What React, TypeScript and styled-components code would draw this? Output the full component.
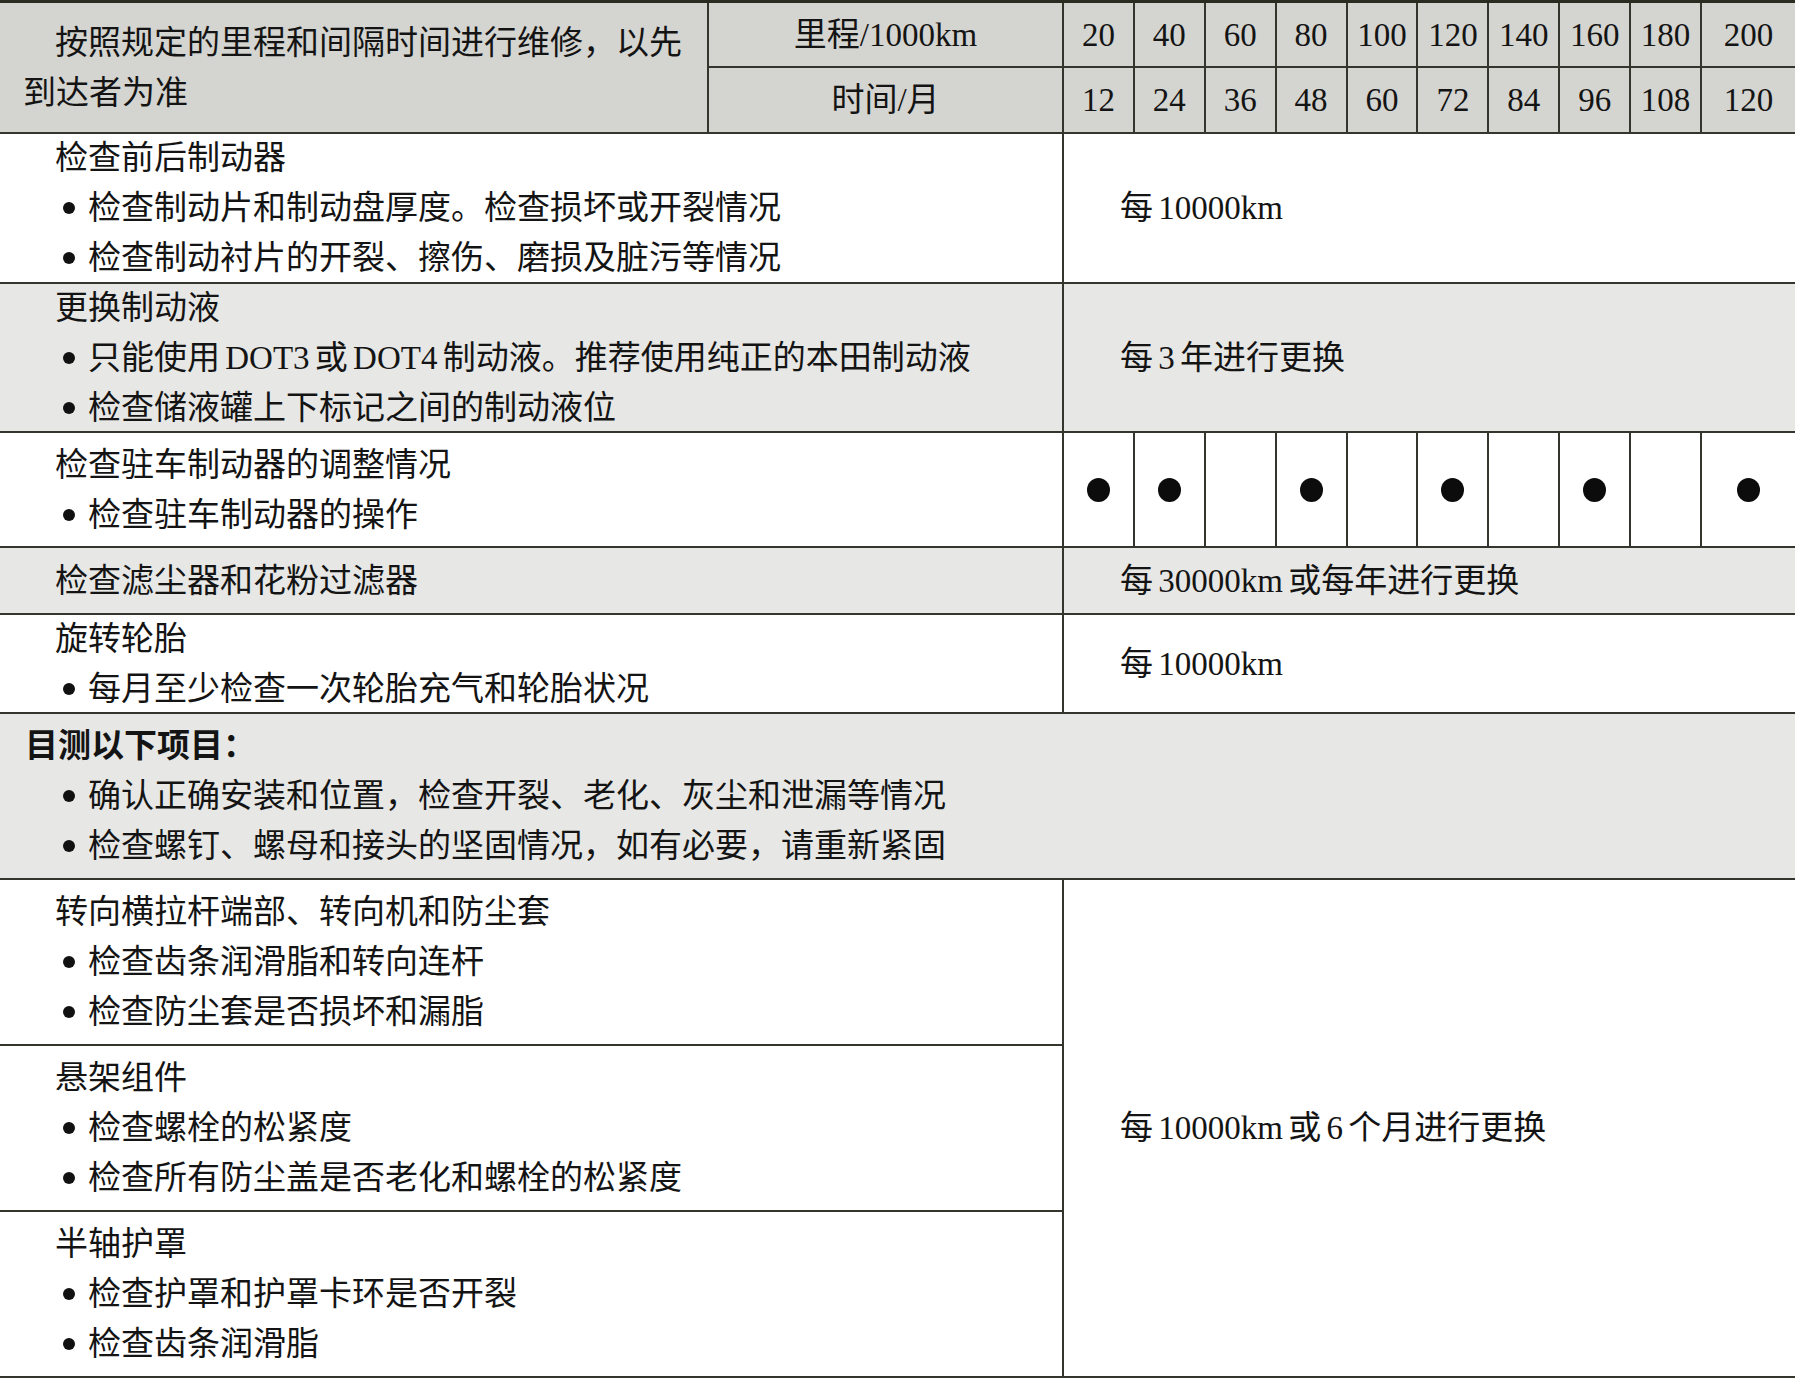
import React from "react";
import styled, { createGlobalStyle, css } from "styled-components";

const GlobalStyle = createGlobalStyle`
  html, body {
    margin: 0;
    padding: 0;
    background: #ffffff;
  }
  body {
    font-family: "Liberation Serif", "Noto Sans CJK SC", serif;
    color: #141414;
  }
`;

const LINE = "#34362e";
const HEAD_BG = "#d4d5d0";
const ZEBRA_BG = "#e7e7e5";

const Table = styled.div`
  display: grid;
  width: 1795px;
  grid-template-columns: 707px 355px repeat(9, 1fr) 95px;
  grid-template-rows: 65px 66px 150px 149px 115px 67px 99px 166px 166px 166px 166px;
  border-top: 3px solid #2a2c22;
  font-family: "Liberation Serif", "Noto Sans CJK SC", serif;
  font-size: 33px;
  line-height: 50px;
  word-spacing: -3px;
  color: #141414;
`;

type CellProps = {
  $cols?: number;
  $rows?: number;
  $bg?: string;
  $divider?: boolean;
};

const Cell = styled.div<CellProps>`
  box-sizing: border-box;
  grid-column: span ${(p) => p.$cols ?? 1};
  grid-row: span ${(p) => p.$rows ?? 1};
  background: ${(p) => p.$bg ?? "#ffffff"};
  border-bottom: 2px solid ${LINE};
  ${(p) =>
    p.$divider &&
    css`
      border-left: 2px solid ${LINE};
    `}
  display: flex;
  min-width: 0;
`;

const HeadNote = styled(Cell)`
  flex-direction: column;
  justify-content: center;
  padding: 0 20px 0 23px;
  white-space: nowrap;
`;

const NoteLine = styled.span<{ $indent?: boolean }>`
  display: block;
  padding-left: ${(p) => (p.$indent ? "32px" : "0")};
`;

const HeadCell = styled(Cell)`
  align-items: center;
  justify-content: center;
  white-space: nowrap;
`;

const ItemCell = styled(Cell)`
  flex-direction: column;
  justify-content: center;
  white-space: nowrap;
`;

const Title = styled.div<{ $bold?: boolean }>`
  padding-left: ${(p) => (p.$bold ? "25px" : "55px")};
  font-weight: ${(p) => (p.$bold ? 700 : 400)};
`;

const Bullet = styled.div`
  display: flex;
  align-items: center;
  padding-left: 63px;
  gap: 13px;
  &::before {
    content: "";
    width: 12px;
    height: 12px;
    border-radius: 50%;
    background: #111;
    flex: none;
  }
`;

const IntervalCell = styled(Cell)`
  align-items: center;
  padding-left: 56px;
  white-space: nowrap;
`;

const DotCell = styled(Cell)`
  align-items: center;
  justify-content: center;
`;

const Dot = styled.span`
  width: 23px;
  height: 24px;
  border-radius: 50%;
  background: #0c0c0c;
`;

const mileage = ["20", "40", "60", "80", "100", "120", "140", "160", "180", "200"];
const months = ["12", "24", "36", "48", "60", "72", "84", "96", "108", "120"];
const parkingDots = [true, true, false, true, false, true, false, true, false, true];

type ItemData = { title: string; bullets: string[] };

const Item: React.FC<{ item: ItemData; bg?: string }> = ({ item, bg }) => (
  <ItemCell $cols={2} $bg={bg}>
    <Title>{item.title}</Title>
    {item.bullets.map((b) => (
      <Bullet key={b}>{b}</Bullet>
    ))}
  </ItemCell>
);

export default function App() {
  return (
    <>
      <GlobalStyle />
      <Table>
        <HeadNote $rows={2} $bg={HEAD_BG}>
          <NoteLine $indent>按照规定的里程和间隔时间进行维修，以先</NoteLine>
          <NoteLine>到达者为准</NoteLine>
        </HeadNote>
        <HeadCell $bg={HEAD_BG} $divider>
          里程/1000km
        </HeadCell>
        {mileage.map((m) => (
          <HeadCell key={"m" + m} $bg={HEAD_BG} $divider>
            {m}
          </HeadCell>
        ))}
        <HeadCell $bg={HEAD_BG} $divider>
          时间/月
        </HeadCell>
        {months.map((m) => (
          <HeadCell key={"t" + m} $bg={HEAD_BG} $divider>
            {m}
          </HeadCell>
        ))}

        <Item
          item={{
            title: "检查前后制动器",
            bullets: ["检查制动片和制动盘厚度。检查损坏或开裂情况", "检查制动衬片的开裂、擦伤、磨损及脏污等情况"],
          }}
        />
        <IntervalCell $cols={10} $divider>
          每 10000km
        </IntervalCell>

        <Item
          bg={ZEBRA_BG}
          item={{
            title: "更换制动液",
            bullets: ["只能使用 DOT3 或 DOT4 制动液。推荐使用纯正的本田制动液", "检查储液罐上下标记之间的制动液位"],
          }}
        />
        <IntervalCell $cols={10} $divider $bg={ZEBRA_BG}>
          每 3 年进行更换
        </IntervalCell>

        <Item item={{ title: "检查驻车制动器的调整情况", bullets: ["检查驻车制动器的操作"] }} />
        {parkingDots.map((on, i) => (
          <DotCell key={"d" + i} $divider>
            {on && <Dot />}
          </DotCell>
        ))}

        <Item bg={ZEBRA_BG} item={{ title: "检查滤尘器和花粉过滤器", bullets: [] }} />
        <IntervalCell $cols={10} $divider $bg={ZEBRA_BG}>
          每 30000km 或每年进行更换
        </IntervalCell>

        <Item item={{ title: "旋转轮胎", bullets: ["每月至少检查一次轮胎充气和轮胎状况"] }} />
        <IntervalCell $cols={10} $divider>
          每 10000km
        </IntervalCell>

        <ItemCell $cols={12} $bg={ZEBRA_BG}>
          <Title $bold>目测以下项目：</Title>
          <Bullet>确认正确安装和位置，检查开裂、老化、灰尘和泄漏等情况</Bullet>
          <Bullet>检查螺钉、螺母和接头的坚固情况，如有必要，请重新紧固</Bullet>
        </ItemCell>

        <Item
          item={{
            title: "转向横拉杆端部、转向机和防尘套",
            bullets: ["检查齿条润滑脂和转向连杆", "检查防尘套是否损坏和漏脂"],
          }}
        />
        <IntervalCell $cols={10} $rows={3} $divider>
          每 10000km 或 6 个月进行更换
        </IntervalCell>
        <Item
          item={{
            title: "悬架组件",
            bullets: ["检查螺栓的松紧度", "检查所有防尘盖是否老化和螺栓的松紧度"],
          }}
        />
        <Item
          item={{
            title: "半轴护罩",
            bullets: ["检查护罩和护罩卡环是否开裂", "检查齿条润滑脂"],
          }}
        />
      </Table>
    </>
  );
}
